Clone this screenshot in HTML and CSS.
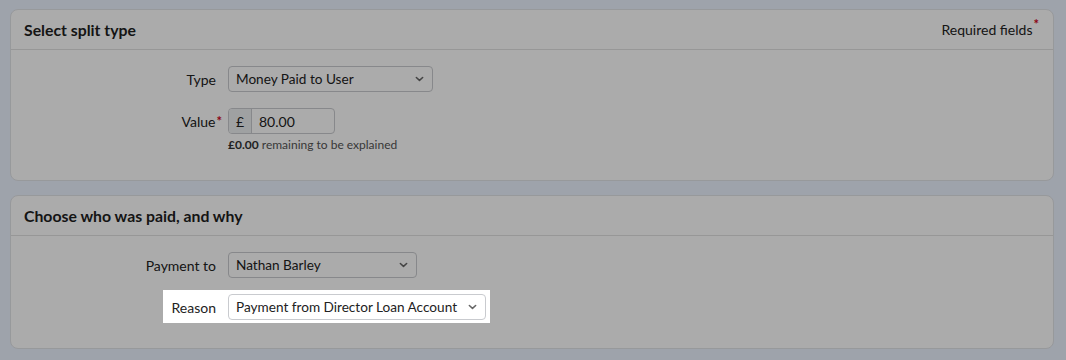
FILE: index.html
```html
<!DOCTYPE html>
<html lang="en">
<head>
    <meta charset="UTF-8">
    <meta name="viewport" content="width=device-width, initial-scale=1.0">
    <title>Split transaction</title>
    <link rel="stylesheet" href="styles.css">
</head>
<body>
    <section class="card">
        <header class="card-header">
            <h2 class="card-title">Select split type</h2>
            <span class="required-note">Required fields<sup class="req">*</sup></span>
        </header>
        <div class="card-body">
            <div class="field">
                <label class="field-label">Type</label>
                <div class="select w-type">
                    <span>Money Paid to User</span>
                    <svg class="chevron" viewBox="0 0 10 6" width="9" height="6"><path d="M1.5 1.3 5 4.5 8.5 1.3" fill="none" stroke="currentColor" stroke-width="1.7" stroke-linecap="round" stroke-linejoin="round"/></svg>
                </div>
            </div>
            <div class="field">
                <label class="field-label">Value<sup class="req hang">*</sup></label>
                <div class="control-stack">
                    <div class="input-group">
                        <span class="addon">£</span>
                        <span class="input">80.00</span>
                    </div>
                    <p class="help"><strong>£0.00</strong> remaining to be explained</p>
                </div>
            </div>
        </div>
    </section>

    <section class="card">
        <header class="card-header">
            <h2 class="card-title">Choose who was paid, and why</h2>
        </header>
        <div class="card-body">
            <div class="field">
                <label class="field-label">Payment to</label>
                <div class="select w-payee">
                    <span>Nathan Barley</span>
                    <svg class="chevron" viewBox="0 0 10 6" width="9" height="6"><path d="M1.5 1.3 5 4.5 8.5 1.3" fill="none" stroke="currentColor" stroke-width="1.7" stroke-linecap="round" stroke-linejoin="round"/></svg>
                </div>
            </div>
            <div class="field spotlight">
                <label class="field-label">Reason</label>
                <div class="select w-reason">
                    <span>Payment from Director Loan Account</span>
                    <svg class="chevron" viewBox="0 0 10 6" width="9" height="6"><path d="M1.5 1.3 5 4.5 8.5 1.3" fill="none" stroke="currentColor" stroke-width="1.7" stroke-linecap="round" stroke-linejoin="round"/></svg>
                </div>
            </div>
        </div>
    </section>
</body>
</html>
```

FILE: styles.css
```css
html {
    min-height: 100%;
    background: #ecf3ff;
}

body {
    margin: 0;
    min-height: 100vh;
    box-sizing: border-box;
    padding: 9px 12px 0 10px;
    display: flex;
    flex-direction: column;
    gap: 14px;
    background: #ecf3ff;
    font-family: Lato, "Liberation Sans", sans-serif;
    font-size: 14px;
    color: #222;
}

.card {
    background: #fff;
    border: 1px solid #e2e4e8;
    border-radius: 8px;
}

.card-header {
    height: 39px;
    padding: 0 14px 0 13px;
    display: flex;
    align-items: center;
    justify-content: space-between;
    border-bottom: 1px solid #e1e1e1;
}

.card-title {
    margin: 0;
    font-size: 15.8px;
    font-weight: 700;
    color: #1e1e1e;
}

.required-note {
    font-size: 14px;
    color: #222;
}

.req {
    color: #d0021b;
    font-size: 13px;
    font-weight: 700;
    line-height: 0;
    margin-left: 1px;
}

.req.hang {
    margin-right: -6px;
}

.card-body {
    padding: 16px 0 28px;
    display: flex;
    flex-direction: column;
    gap: 16px;
}

.field {
    display: grid;
    grid-template-columns: 205px auto;
    column-gap: 12px;
    align-items: start;
}

.field-label {
    height: 26px;
    display: flex;
    align-items: center;
    justify-content: flex-end;
    color: #222;
}

.select {
    height: 24px;
    border: 1px solid #c9cbcf;
    border-radius: 4px;
    background: #fff;
    padding: 0 8px 0 7px;
    display: flex;
    align-items: center;
    justify-content: space-between;
    font-size: 13.6px;
    color: #222;
}

.chevron {
    color: #666;
}

.w-type { width: 188px; }
.w-payee { width: 172px; }
.w-reason { width: 241px; }

.control-stack {
    display: flex;
    flex-direction: column;
    gap: 4px;
}

.input-group {
    display: flex;
    width: 107px;
    height: 26px;
    box-sizing: border-box;
    border: 1px solid #c9cbcf;
    border-radius: 4px;
    overflow: hidden;
}

.addon {
    width: 22px;
    display: flex;
    align-items: center;
    justify-content: center;
    background: #eef0f2;
    border-right: 1px solid #c9cbcf;
}

.input {
    padding: 0 7px;
    display: flex;
    align-items: center;
}

.help {
    margin: 0;
    font-size: 12px;
    line-height: 14px;
    color: #555;
}

.help strong {
    color: #333;
}

/* spotlight over the reason row */
.spotlight {
    position: relative;
    z-index: 1;
}

.spotlight::before {
    content: '';
    position: absolute;
    top: -4px;
    bottom: -3px;
    left: 152px;
    width: 327px;
    z-index: -1;
    background: #fff;
    box-shadow: 0 0 0 3000px rgba(0, 0, 0, 0.33);
}
```
